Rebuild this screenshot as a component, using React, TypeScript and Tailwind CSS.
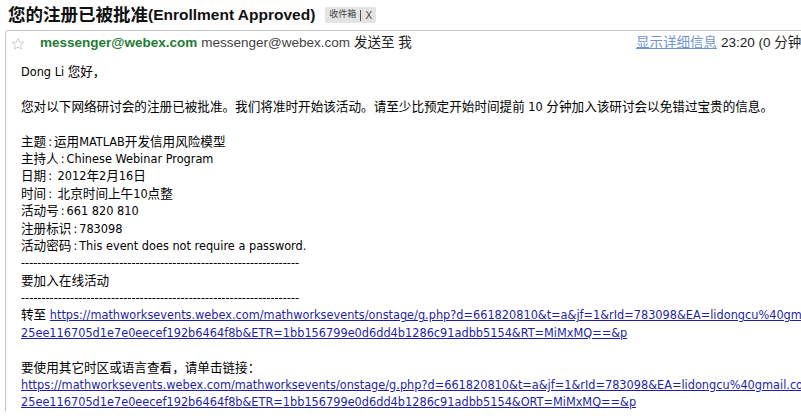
import React from 'react';

const BODY_FONT = { fontFamily: '"DejaVu Sans Condensed", "Noto Sans CJK SC", sans-serif' };
const HEAD_FONT = { fontFamily: '"Liberation Sans", "Noto Sans CJK SC", sans-serif' };

const LINK_1 =
    'https://mathworksevents.webex.com/mathworksevents/onstage/g.php?d=661820810&t=a&jf=1&rId=783098&EA=lidongcu%40gmail.com&ETK=';
const LINK_1B = '25ee116705d1e7e0eecef192b6464f8b&ETR=1bb156799e0d6dd4b1286c91adbb5154&RT=MiMxMQ==&p';
const LINK_2B = '25ee116705d1e7e0eecef192b6464f8b&ETR=1bb156799e0d6dd4b1286c91adbb5154&ORT=MiMxMQ==&p';

const DASHES = '-'.repeat(68);

const StarIcon: React.FC = () => (
    <svg width="14" height="14" viewBox="0 0 24 24" fill="none" stroke="#c9c9c9" strokeWidth="1.6" strokeLinejoin="round">
        <path d="M12 2.5l2.9 6.1 6.6.8-4.9 4.6 1.3 6.6L12 17.3l-5.9 3.3 1.3-6.6-4.9-4.6 6.6-.8z" />
    </svg>
);

const Line: React.FC<{ children?: React.ReactNode }> = ({ children }) => (
    <div className="h-[17.4px] leading-[17.4px] whitespace-nowrap">{children}</div>
);

const Blank: React.FC = () => <div className="h-[17.4px]" />;

const Field: React.FC<{ label: string; value: string }> = ({ label, value }) => (
    <Line>
        {label}
        <span className="mx-[2px]">:</span>
        {value}
    </Line>
);

const Link: React.FC<{ children: React.ReactNode }> = ({ children }) => (
    <a href="#" className="text-[#1f1fa5] underline">
        {children}
    </a>
);

const App: React.FC = () => {
    return (
        <div className="w-[801px] h-[416px] overflow-hidden bg-white text-black">
            {/* subject line */}
            <div className="h-[30px] flex items-center pl-[8px] whitespace-nowrap" style={HEAD_FONT}>
                <span className="font-bold text-[17.5px] text-[#111]">您的注册已被批准</span>
                <span className="font-bold text-[15.5px] text-[#111]">(Enrollment Approved)</span>
                <span className="ml-[10px] flex items-center h-[16px] bg-[#e3e3e3] rounded-[2px] text-[9px] text-[#444] px-[4px] gap-[4px]">
                    <span>收件箱</span>
                    <span className="w-px h-[11px] bg-[#555]" />
                    <span className="text-[10px]">X</span>
                </span>
            </div>

            <div className="ml-[5px] w-[900px] border-l border-t border-[#c6c6c6] rounded-tl-[4px]">
                {/* sender row */}
                <div className="h-[25px] flex items-center whitespace-nowrap text-[13.5px]" style={HEAD_FONT}>
                    <div className="w-[630px] shrink-0 flex items-center">
                        <span className="ml-[5px] mr-[15px] flex">
                            <StarIcon />
                        </span>
                        <span className="font-bold text-[#1e7b34]">messenger@webex.com</span>
                        <span className="ml-[4px] text-[#444]">messenger@webex.com</span>
                        <span className="ml-[4px] text-[#222]">发送至 我</span>
                    </div>
                    <a href="#" className="text-[#6f95cf] underline">显示详细信息</a>
                    <span className="ml-[4px] text-[#222]">23:20 (0 分钟前)</span>
                </div>

                {/* message body */}
                <div className="pl-[15px] pt-[7px] text-[12.6px]" style={BODY_FONT}>
                    <Line>Dong Li 您好，</Line>
                    <Blank />
                    <Line>您对以下网络研讨会的注册已被批准。我们将准时开始该活动。请至少比预定开始时间提前 10 分钟加入该研讨会以免错过宝贵的信息。</Line>
                    <Blank />
                    <Field label="主题" value="运用MATLAB开发信用风险模型" />
                    <Field label="主持人" value="Chinese Webinar Program" />
                    <Field label="日期" value=" 2012年2月16日" />
                    <Field label="时间" value=" 北京时间上午10点整" />
                    <Field label="活动号" value="661 820 810" />
                    <Field label="注册标识" value="783098" />
                    <Field label="活动密码" value="This event does not require a password." />
                    <Line>{DASHES}</Line>
                    <Line>要加入在线活动</Line>
                    <Line>{DASHES}</Line>
                    <Line>
                        转至 <Link>{LINK_1}</Link>
                    </Line>
                    <Line>
                        <Link>{LINK_1B}</Link>
                    </Line>
                    <Blank />
                    <Line>要使用其它时区或语言查看，请单击链接：</Line>
                    <Line>
                        <Link>{LINK_1}</Link>
                    </Line>
                    <Line>
                        <Link>{LINK_2B}</Link>
                    </Line>
                </div>
            </div>
        </div>
    );
};

export default App;
